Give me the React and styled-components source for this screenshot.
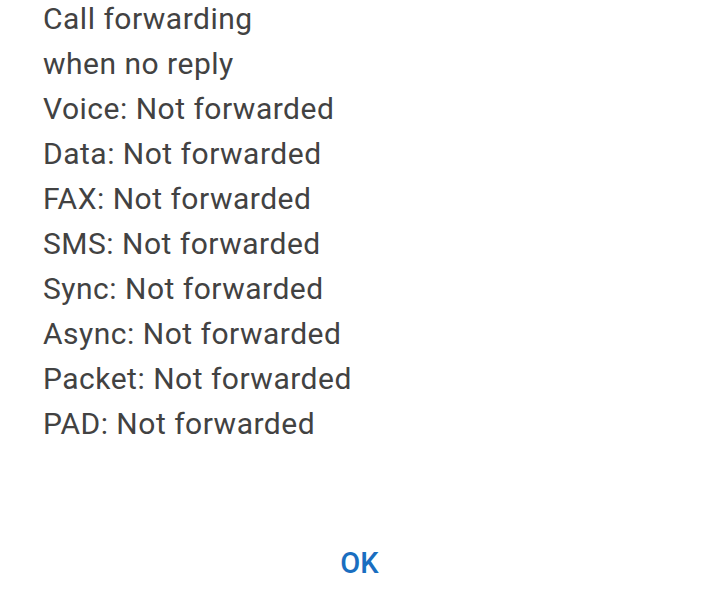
import React from "react";
import styled, { createGlobalStyle } from "styled-components";

const Global = createGlobalStyle`
  html, body { margin: 0; padding: 0; background: #ffffff; }
  #root { width: 704px; height: 591px; }
`;

const Dialog = styled.div`
  width: 704px;
  height: 591px;
  box-sizing: border-box;
  display: flex;
  flex-direction: column;
  background: #ffffff;
  font-family: Roboto, "Noto Sans", sans-serif;
`;

const Body = styled.div`
  flex: 1;
  padding: 0 0 0 43px;
  margin-top: -4px;
`;

const Line = styled.div`
  font-size: 30px;
  line-height: 45px;
  letter-spacing: 0.5px;
  color: #424242;
  white-space: nowrap;
`;

const Actions = styled.div`
  display: flex;
  justify-content: center;
  padding: 0 0 6px 15px;
`;

const OkButton = styled.button`
  border: none;
  background: transparent;
  padding: 0 12px;
  font-family: Roboto, "Noto Sans", sans-serif;
  font-size: 29px;
  font-weight: 500;
  line-height: 44px;
  color: #1a6ec0;
  cursor: pointer;
`;

const lines = [
  "Call forwarding",
  "when no reply",
  "Voice: Not forwarded",
  "Data: Not forwarded",
  "FAX: Not forwarded",
  "SMS: Not forwarded",
  "Sync: Not forwarded",
  "Async: Not forwarded",
  "Packet: Not forwarded",
  "PAD: Not forwarded",
];

export default function App() {
  return (
    <>
      <Global />
      <Dialog>
        <Body>
          {lines.map((t) => (
            <Line key={t}>{t}</Line>
          ))}
        </Body>
        <Actions>
          <OkButton>OK</OkButton>
        </Actions>
      </Dialog>
    </>
  );
}
